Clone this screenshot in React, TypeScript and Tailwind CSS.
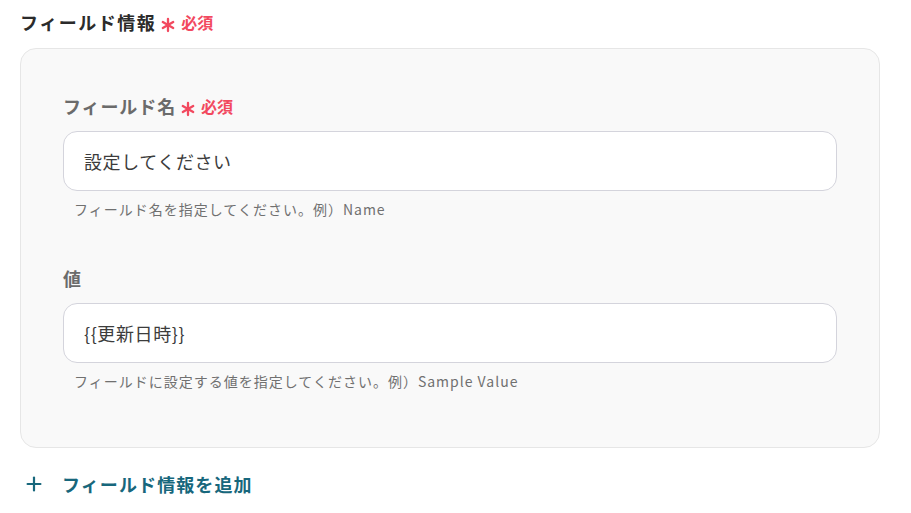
import { Asterisk, Plus } from 'lucide-react'

type FieldProps = {
  label: string
  required?: boolean
  value: string
  help: string
}

const font = { fontFamily: '"Noto Sans CJK JP", "Noto Sans", sans-serif' }

const Required = () => (
  <span className="flex items-center gap-[1px] text-[16px] font-bold leading-[24px] text-[#f2495f]">
    <Asterisk className="translate-y-[3px]" size={24} strokeWidth={2.3} />
    必須
  </span>
)

const Field = ({ label, required, value, help }: FieldProps) => (
  <div className="flex flex-col">
    <div className="flex items-center">
      <span className="text-[18px] font-bold leading-[24px] tracking-[0.9px] text-[#6b6b6b]">{label}</span>
      {required && <Required />}
    </div>
    <div className="mt-[13px] flex h-[60px] items-center rounded-[14px] border border-[#d4d4dc] bg-white px-[20px] text-[18px] tracking-[0.6px] text-[#3c3c3c]">
      {value}
    </div>
    <p className="mt-[9px] pl-[11px] text-[14px] leading-[18px] tracking-[1px] text-[#707070]">{help}</p>
  </div>
)

const App = () => {
  return (
    <div className="min-h-[513px] bg-white px-5 pt-[10px]" style={font}>
      <div className="flex items-center">
        <h2 className="text-[18px] font-bold leading-[24px] tracking-[1.5px] text-[#2b2b2b]">フィールド情報</h2>
        <Required />
      </div>

      <div className="mt-[14px] flex w-[860px] flex-col gap-[48px] rounded-[16px] border border-[#e6e6e6] bg-[#f9f9f9] pb-[57px] pl-[42px] pr-[42px] pt-[45px]">
        <Field
          label="フィールド名"
          required
          value="設定してください"
          help="フィールド名を指定してください。例）Name"
        />
        <Field
          label="値"
          value="{{更新日時}}"
          help="フィールドに設定する値を指定してください。例）Sample Value"
        />
      </div>

      <button className="mt-[24px] flex items-center gap-[17px] pl-[3px] text-[18px] font-bold leading-[24px] tracking-[1.1px] text-[#17677c]">
        <Plus size={22} strokeWidth={2.4} />
        フィールド情報を追加
      </button>
    </div>
  )
}

export default App
